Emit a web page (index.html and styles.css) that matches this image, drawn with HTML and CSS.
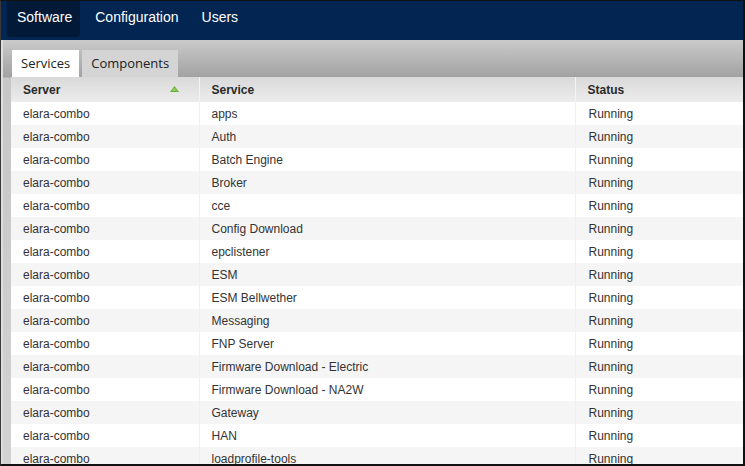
FILE: index.html
```html
<!DOCTYPE html>
<html>
<head>
<meta charset="utf-8">
<link rel="stylesheet" href="styles.css">
</head>
<body>
<div class="frame">
  <nav class="topnav">
    <a class="nav-item active">Software</a>
    <a class="nav-item">Configuration</a>
    <a class="nav-item">Users</a>
  </nav>
  <div class="content">
    <div class="tabs">
      <div class="tab active">Services</div>
      <div class="tab">Components</div>
    </div>
    <div class="grid">
      <table>
        <colgroup><col class="c1"><col class="c2"><col class="c3"></colgroup>
        <thead>
          <tr>
            <th><span class="th-in">Server<svg class="sort" width="9" height="6" viewBox="0 0 9 6"><polygon points="4.5,0 9,6 0,6" fill="#6cab3c"/><polygon points="4.5,1.5 7.2,5 1.8,5" fill="#8fcd55"/></svg></span></th>
            <th>Service</th>
            <th>Status</th>
          </tr>
        </thead>
        <tbody>
          <tr><td>elara-combo</td><td>apps</td><td>Running</td></tr>
          <tr><td>elara-combo</td><td>Auth</td><td>Running</td></tr>
          <tr><td>elara-combo</td><td>Batch Engine</td><td>Running</td></tr>
          <tr><td>elara-combo</td><td>Broker</td><td>Running</td></tr>
          <tr><td>elara-combo</td><td>cce</td><td>Running</td></tr>
          <tr><td>elara-combo</td><td>Config Download</td><td>Running</td></tr>
          <tr><td>elara-combo</td><td>epclistener</td><td>Running</td></tr>
          <tr><td>elara-combo</td><td>ESM</td><td>Running</td></tr>
          <tr><td>elara-combo</td><td>ESM Bellwether</td><td>Running</td></tr>
          <tr><td>elara-combo</td><td>Messaging</td><td>Running</td></tr>
          <tr><td>elara-combo</td><td>FNP Server</td><td>Running</td></tr>
          <tr><td>elara-combo</td><td>Firmware Download - Electric</td><td>Running</td></tr>
          <tr><td>elara-combo</td><td>Firmware Download - NA2W</td><td>Running</td></tr>
          <tr><td>elara-combo</td><td>Gateway</td><td>Running</td></tr>
          <tr><td>elara-combo</td><td>HAN</td><td>Running</td></tr>
          <tr><td>elara-combo</td><td>loadprofile-tools</td><td>Running</td></tr>
        </tbody>
      </table>
    </div>
  </div>
</div>
</body>
</html>
```
FILE: styles.css
```css
* { box-sizing: border-box; }
html, body { margin: 0; padding: 0; }
body {
  width: 745px;
  height: 466px;
  overflow: hidden;
  background: #fff;
  font-family: "Liberation Sans", Arial, sans-serif;
}
.frame {
  width: 745px;
  height: 466px;
  border-top: 1px solid #111;
  border-left: 1px solid #3a3a3a;
  border-right: 2px solid #111;
  border-bottom: 2px solid #111;
  display: flex;
  flex-direction: column;
  overflow: hidden;
  background: #fff;
}
.topnav {
  height: 39px;
  flex: none;
  background: #032552;
  display: flex;
  align-items: flex-start;
  padding-left: 6px;
  gap: 5px;
}
.nav-item {
  color: #fff;
  font-size: 14px;
  height: 36px;
  line-height: 33px;
  padding: 0 8px 0 10px;
  border-radius: 0 0 4px 4px;
}
.nav-item.active {
  background: #021a38;
}
.content {
  flex: 1;
  min-height: 0;
  display: flex;
  flex-direction: column;
  background: linear-gradient(to bottom, #cacaca 0px, #a2a2a2 37px, #c6c6c6 38px, #d2d2d2 100%);
  padding-left: 8px;
  border-left: 2px solid #dedede;
}
.tabs {
  height: 37px;
  flex: none;
  display: flex;
  align-items: flex-end;
  gap: 3px;
  padding-left: 1px;
}
.tab {
  height: 27px;
  line-height: 26px;
  font-family: "Open Sans", "DejaVu Sans", sans-serif;
  font-size: 13px;
  color: #222;
  background: #d4d4d4;
  padding: 0 9px;
}
.tab.active {
  background: #fff;
}
.grid {
  flex: 1;
  min-height: 0;
  background: #fff;
  overflow: hidden;
}
table {
  width: 732px;
  border-collapse: collapse;
  table-layout: fixed;
  font-size: 12px;
  color: #333;
}
col.c1 { width: 188px; }
col.c2 { width: 376px; }
col.c3 { width: 168px; }
thead th {
  height: 25px;
  text-align: left;
  font-weight: bold;
  color: #2a2a2a;
  padding: 0 12px;
  background: linear-gradient(to bottom, #d9d9d9, #ececec);
  border-left: 1px solid #f4f4f4;
}
thead th:first-child {
  border-left: none;
  padding-right: 20px;
}
.th-in {
  display: flex;
  align-items: center;
  justify-content: space-between;
}
.sort { margin-top: -2px; }
tbody td {
  height: 23px;
  padding: 0 12px;
  border-left: 1px solid #f0f0f0;
  white-space: nowrap;
}
tbody td:first-child { border-left: none; }
tbody tr:nth-child(even) td { background: #f5f5f5; }
tbody td:nth-child(3) { padding-left: 13px; }
```
